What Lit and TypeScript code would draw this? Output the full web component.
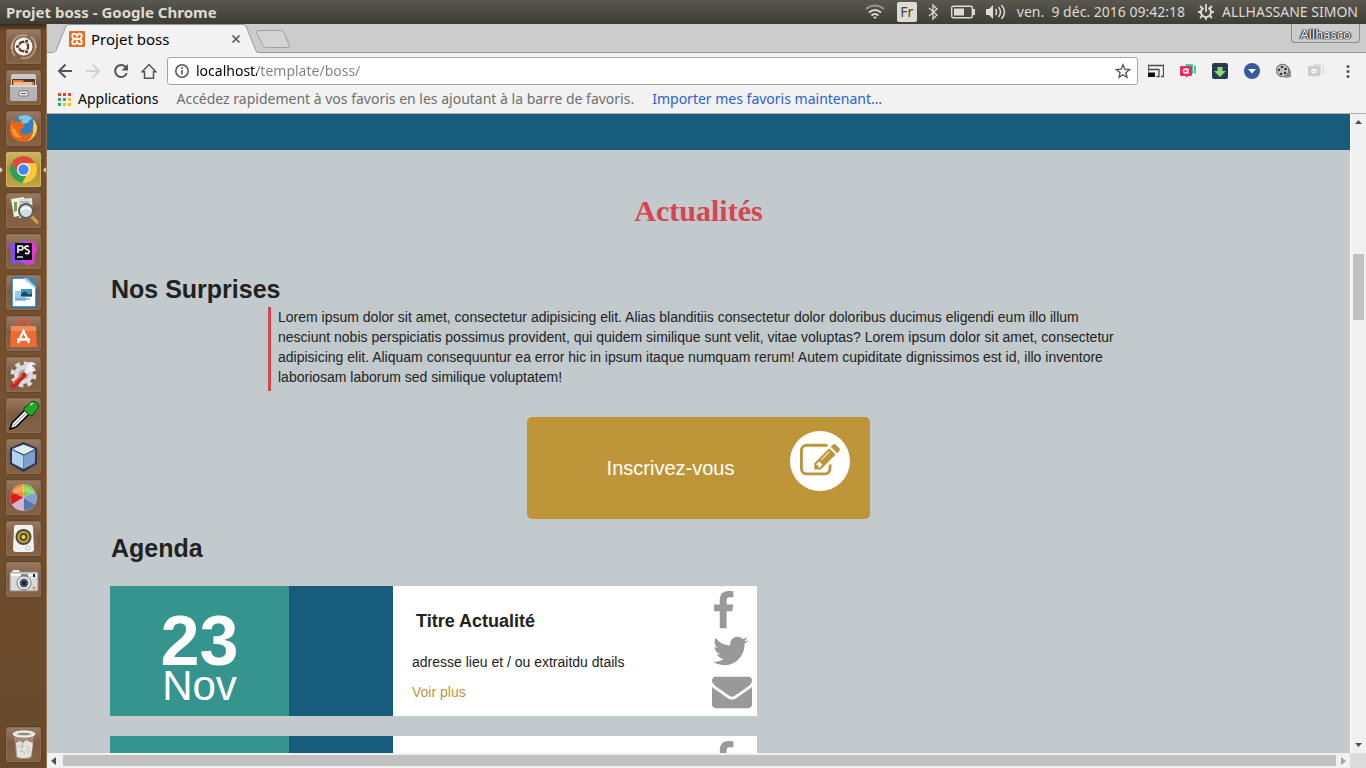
import { LitElement, html, css, svg } from "lit";
import { customElement } from "lit/decorators.js";

const PATHS = {
  facebook:
    "M1343 12v264h-157q-86 0-116 36t-30 108v189h293l-39 296h-254v759h-306v-759h-255v-296h255v-218q0-186 104-288.5t277-102.5q147 0 228 12z",
  twitter:
    "M1684 408q-67 98-162 167 1 14 1 42 0 130-38 259.5t-115.5 248.5-184.5 210.5-258 146-323 54.5q-271 0-496-145 35 4 78 4 225 0 401-138-105-2-188-64.5t-114-159.5q33 5 61 5 43 0 85-11-112-23-185.5-111.5t-73.5-205.5v-4q68 38 146 41-66-44-105-115t-39-154q0-88 44-163 121 149 294.5 238.5t371.5 99.5q-8-38-8-74 0-134 94.5-228.5t228.5-94.5q140 0 236 102 109-21 205-78-37 115-142 178 93-10 186-50z",
  envelope:
    "M1792 710v794q0 66-47 113t-113 47h-1472q-66 0-113-47t-47-113v-794q44 49 101 87 362 246 497 345 57 42 92.5 65.5t94.5 48 110 24.5h2q51 0 110-24.5t94.5-48 92.5-65.5q170-123 498-345 57-39 100-87zm0-294q0 79-49 151t-122 123q-376 261-468 325-10 7-42.5 31t-54 38-52 31.5-57.5 27-50 9h-2q-23 0-50-9t-57.5-27-52-31.5-54-38-42.5-31q-91-64-262-182.5t-205-142.5q-62-42-117-115.5t-55-136.5q0-78 41.5-130t118.5-52h1472q65 0 112.5 47t47.5 113z",
  edit:
    "M888 1184l116-116-152-152-116 116v56h96v96h56zm440-720q-16-16-33 1l-350 350q-17 17-1 33t33-1l350-350q17-17 1-33zm80 594v190q0 119-84.5 203.5t-203.5 84.5h-832q-119 0-203.5-84.5t-84.5-203.5v-832q0-119 84.5-203.5t203.5-84.5h832q63 0 117 25 15 7 18 23 3 17-9 29l-49 49q-14 14-32 8-23-6-45-6h-832q-66 0-113 47t-47 113v832q0 66 47 113t113 47h832q66 0 113-47t47-113v-126q0-13 9-22l64-64q15-15 35-7t20 29zm-96-738l288 288-672 672h-288v-288zm444 132l-92 92-288-288 92-92q28-28 68-28t68 28l152 152q28 28 28 68t-28 68z",
};

/* Launcher artwork, each on a 35 by 35 grid */
const LAUNCHER = [
  {
    label: "Rechercher",
    art: svg`<g fill="none" stroke="#d9c3b0" stroke-opacity=".55" stroke-width="2"><path d="M6 20C5 11 12 4 21 7"/><path d="M29 14c2 9-5 17-14 15"/><path d="M9 27C5 23 5 17 7 14" /><path d="M25 8c4 3 5 7 5 11"/></g>
      <circle cx="17.500" cy="17.500" r="9" fill="#fff"/><circle cx="17.500" cy="17.500" r="4.700" fill="none" stroke="#5c3b26" stroke-width="2.400"/>
      <g fill="#5c3b26" stroke="#fff" stroke-width="1"><circle cx="11.500" cy="17.500" r="2.100"/><circle cx="20.600" cy="12.200" r="2.100"/><circle cx="20.600" cy="22.800" r="2.100"/></g>`,
  },
  {
    label: "Fichiers",
    art: svg`<path d="M5 6q0-2 2-2h21q2 0 2 2v10H5z" fill="#c9c9c9"/><path d="M6 9h23v7H6z" fill="#4a3a30"/><path d="M7 10h10l1 2h10v4H7z" fill="#e9772f"/><path d="M8 12h18v4H8z" fill="#f7b98a"/>
      <path d="M4 15h27v14q0 2-2 2H6q-2 0-2-2z" fill="#b4b4b4"/><path d="M4 15h27v2H4z" fill="#d6d6d6"/><rect x="13" y="21" width="9" height="5" rx="1" fill="#eee" stroke="#777"/><path d="M15 23h5v1h-5z" fill="#555"/>`,
  },
  {
    label: "Firefox",
    art: svg`<circle cx="18" cy="17" r="13" fill="#2f7fc1"/><path d="M12 6q9-5 15 2-4 0-5 4l-6 1z" fill="#7cc6ec"/>
      <path d="M4 15q0-5 3-8 0 3 2 4 2-1 4 0 1-3 4-3-2 2-1 5 3 1 3 3l-4 2q-2 3 2 5 5 2 8-2 5-4 3-11 5 5 2 12-3 9-12 9T5 24q-2-4-1-9z" fill="#e8641b"/><path d="M27 8q6 6 3 14-3 6-8 8 6-6 5-12 1-5 0-10z" fill="#fbd04b"/><path d="M5 13q2 5 5 6 1 5 6 7-6 2-9-3-2-5-2-10z" fill="#f79a28"/>`,
  },
  {
    label: "Google Chrome",
    active: true,
    art: svg`<circle cx="17.500" cy="17.500" r="13.500" fill="#fcc934"/><path d="M5.800 10.700a13.500 13.500 0 0 0 10.200 20.200l5.800-10L11.500 20z" fill="#2aa058"/><path d="M17.500 11h11.700a13.500 13.500 0 0 0-23.400-.3l5.900 10z" fill="#de4b3c"/>
      <circle cx="17.500" cy="17.500" r="6.600" fill="#fff"/><circle cx="17.500" cy="17.500" r="5.200" fill="#4587f0"/>`,
  },
  {
    label: "Visionneur de documents",
    art: svg`<path d="M5 6l13-2 3 17-13 3z" fill="#f4f2e8"/><path d="M12 6l14-1 1 19-14 1z" fill="#e4e2d6"/><path d="M8 9l3 0v9l-3 1z" fill="#7a9e52"/><path d="M14 9h9M14 12h4" stroke="#888"/>
      <path d="M25 23l6 6" stroke="#d39a3a" stroke-width="3.500" stroke-linecap="round"/><circle cx="20" cy="18" r="7" fill="#cfdde4" stroke="#5c5f60" stroke-width="2"/><path d="M15 17q5-5 10 0" stroke="#fff" fill="none" stroke-width="2"/>`,
  },
  {
    label: "PhpStorm",
    art: svg`<path d="M4 9l9 2 5-5 11 2 2 9-3 5 1 7-8 2-6-3-9 2-1-8z" fill="#b24df0"/><path d="M4 9l9 2 4-4-2 20-9 3z" fill="#7d4df2"/><path d="M22 7l7 1 2 9-3 5 1 7-8 2z" fill="#e23ccf"/><rect x="9" y="9" width="17" height="17" fill="#0c0a10"/>
      <path d="M12 19v-7h3q2 0 2 2t-2 2h-3M23 12.500q-3-1-4 .5t2 2.500 2 3-4 .5" fill="none" stroke="#fff" stroke-width="1.600"/><path d="M11 23h6" stroke="#fff" stroke-width="1.300"/>`,
  },
  {
    label: "LibreOffice Impress",
    art: svg`<path d="M6 3h15l9 8v21H6z" fill="#fff" stroke="#2376ae" stroke-width="1.500"/><path d="M17 3h13v9z" fill="#3d87b5"/><path d="M17 3l4 0 9 9v2z" fill="#9cc9e3"/><path d="M9 16h11v10H9z" fill="#9ecbe8"/><path d="M15 14h11v8H15z" fill="#3c97c9"/><path d="M15 19q4-4 6-1t5 0v3H15z" fill="#26474d"/><path d="M9 24h15" stroke="#4b93c0"/>`,
  },
  {
    label: "Logithèque",
    art: svg`<path d="M12 11V7q0-3 3-3h5q3 0 3 3v4" fill="none" stroke="#d8583a" stroke-width="2.500"/><path d="M5 10h25l1 21H4z" fill="#ee6a35"/><path d="M5 10h25v5H5z" fill="#f58c57"/><path d="M12 27l5.500-12L23 27M11 23.500h13" fill="none" stroke="#fff" stroke-width="2.300"/>`,
  },
  {
    label: "Paramètres système",
    art: svg`<circle cx="17.500" cy="17.500" r="8.500" fill="#dcdcdc" stroke="#dcdcdc" stroke-width="2"/><circle cx="17.500" cy="17.500" r="11" fill="none" stroke="#dcdcdc" stroke-width="4" stroke-dasharray="4.600 4.040"/><circle cx="17.500" cy="17.500" r="5" fill="#aaa39e"/>
      <path d="M17 19l8-9" stroke="#f2f2f2" stroke-width="4"/><path d="M22 6q5-3 8 2l-4 0 0 4 4 1q-5 4-9-1z" fill="#f2f2f2"/><path d="M7 29L18 18" stroke="#cc1f1f" stroke-width="5" stroke-linecap="round"/><path d="M7 27l9-9" stroke="#f06a5c" stroke-width="1.200"/>`,
  },
  {
    label: "Pipette",
    art: svg`<path d="M4 31l2-6L20 11l4 4L10 29z" fill="#fff" stroke="#000" stroke-width="1.500"/><path d="M7 28L21 14" stroke="#aaa" stroke-width="1.500"/><path d="M18 10l3-2 4-4q3-2 6 1t1 6l-4 4-2 3-3-1-5-5z" fill="#27a327" stroke="#0a4a0a"/><path d="M24 7l3-2" stroke="#9be79b" stroke-width="2"/>`,
  },
  {
    label: "NetBeans",
    art: svg`<path d="M17.500 3L31 9v16l-13.500 8L4 25V9z" fill="#1d2d52" opacity=".85"/><path d="M17.500 5.500L29 10l-11 5.500L6 10z" fill="#dcedf0"/><path d="M6 11l11.500 5.500V30L6 24z" fill="#b4d1ef"/><path d="M29 11l-11 5.500V30l11-6z" fill="#7d9fcb"/>`,
  },
  {
    label: "Sélecteur de couleurs",
    art: svg`<g stroke="#fff" stroke-opacity=".5" stroke-width=".5"><path d="M17.500 17.500L6 11.500A13 13 0 0 1 17.500 4.500z" fill="#f98a2e"/><path d="M17.500 17.500v-13A13 13 0 0 1 29 11.500z" fill="#7bcf3c"/><path d="M17.500 17.500L29 11.500a13 13 0 0 1 0 13z" fill="#7fa1d0"/><path d="M17.500 17.500L29 24.500a13 13 0 0 1-11.500 6z" fill="#5477b4"/><path d="M17.500 17.500v13a13 13 0 0 1-11.500-6z" fill="#d5b3d2"/><path d="M17.500 17.500L6 24.500a13 13 0 0 1 0-13z" fill="#dc1c1c"/></g><path d="M6 15a12 12 0 0 1 23 0q-12-6-23 0z" fill="#fff" opacity=".25"/>`,
  },
  {
    label: "Rhythmbox",
    art: svg`<path d="M6 13q-3 4 0 10M29 13q3 4 0 10" fill="none" stroke="#7e756e"/><path d="M10 4h15q2 0 2 3l1 21q0 3-3 3H10q-3 0-3-3L8 7q0-3 2-3z" fill="#f1f1ef"/><circle cx="17.500" cy="16" r="8" fill="#4a4a42"/><circle cx="17.500" cy="16" r="6" fill="#c9a92b"/><circle cx="17.500" cy="16" r="4" fill="#57502f"/><circle cx="17.500" cy="16" r="2" fill="#e3cf6f"/><circle cx="22" cy="27" r="2" fill="#fff" stroke="#bbb"/>`,
  },
  {
    label: "Appareil photo",
    art: svg`<rect x="4" y="10" width="28" height="19" rx="1" fill="#d9d9d7" stroke="#8e8e8c"/><path d="M6 10l1-2h6l1 2z" fill="#eee"/><path d="M5 12h26v2H5z" fill="#f6f6f6"/><rect x="15" y="12" width="7" height="3" fill="#888"/><circle cx="18" cy="21" r="7" fill="#eee" stroke="#777"/><circle cx="18" cy="21" r="4.500" fill="#60646a"/><circle cx="18" cy="21" r="2.500" fill="#12243e"/><circle cx="28" cy="26" r="1.500" fill="#e8963c"/><path d="M28 12v3" stroke="#222" stroke-width="2"/>`,
  },
];

const TRASH = svg`<path d="M8 8h20l-2 22q-1 2-8 2t-8-2z" fill="#fff" opacity=".25"/><path d="M10 16l4-2 3 2 3-3 4 2 3 1-2 13q-1 2-7 2t-7-2z" fill="#e2e2de"/><path d="M12 18l3 3 3-2M21 19l3 3M14 25l2-2 3 4M22 26l1-2M17 15l-1 4M20 22l2 2" fill="none" stroke="#b4b4ae"/><ellipse cx="18" cy="7" rx="11" ry="3" fill="#dfe3e0" stroke="#fff"/><ellipse cx="18" cy="7" rx="7" ry="1.200" fill="#8f8a80"/>`;

const glyph = (width: number, height: number, box: string, body: unknown) =>
  html`<svg class="glyph" width=${width} height=${height} viewBox=${box} aria-hidden="true">${body}</svg>`;

@customElement("system-bar")
class SystemBar extends LitElement {
  static styles = css`
    :host { display: flex; align-items: center; height: 24px; padding: 0 8px 0 6px; color: #dfdbd2;
      background: linear-gradient(#59574e, #3d3c37); font: 14px/24px "Noto Sans", sans-serif; }
    .title { flex: 1; font-weight: 700; font-size: 15px; white-space: nowrap; }
    .tray { display: flex; align-items: center; white-space: nowrap; }
    .glyph { display: block; }
    .wifi { margin-right: 12px; }
    .lang { width: 20px; height: 20px; margin-right: 10px; border-radius: 2px; background: #dfdbd2; color: #45433e; text-align: center; line-height: 20px; }
    .blue { margin-right: 12px; }
    .bat { margin-right: 11px; }
    .vol { margin-right: 11px; }
    .clock { margin-right: 13px; }
    .gear { margin-right: 8px; }
  `;
  render() {
    return html`
      <span class="title">Projet boss - Google Chrome</span>
      <div class="tray">
        <span class="wifi">${glyph(20, 16, "0 0 20 16", svg`<g fill="none" stroke-width="2" stroke="#dfdbd2"><path d="M1 5q9-7 18 0" stroke-opacity=".5"/><path d="M4 8.500q6-5 12 0"/><path d="M6.500 11.500q3.500-3 7 0"/></g><path d="M8 13q2-1 4 0l-2 2z" fill="#dfdbd2"/>`)}</span>
        <span class="lang">Fr</span>
        <span class="blue">${glyph(12, 18, "0 0 12 18", svg`<path d="M2 5l8 7-4 4V2l4 4-8 7" fill="none" stroke="#dfdbd2" stroke-width="1.300"/>`)}</span>
        <span class="bat">${glyph(24, 14, "0 0 24 14", svg`<rect x=".7" y="1.200" width="20.600" height="11.600" rx="1.500" fill="none" stroke="#dfdbd2" stroke-width="1.400"/><path d="M3 3.500h10v7H3zM22 4h2v6h-2z" fill="#dfdbd2"/>`)}</span>
        <span class="vol">${glyph(20, 16, "0 0 20 16", svg`<path d="M0 5h3l4-4v14l-4-4H0z" fill="#dfdbd2"/><path d="M9.500 5q2 3 0 6M12.500 3q4 5 0 10M15.500 1q6 7 0 14" fill="none" stroke="#dfdbd2" stroke-width="1.500"/>`)}</span>
        <span class="clock">ven.&nbsp; 9 déc. 2016 09:42:18</span>
        <span class="gear">${glyph(16, 16, "0 0 16 16", svg`<path d="M5.500 3.800a5 5 0 1 0 5 0" fill="none" stroke="#dfdbd2" stroke-width="2"/><path d="M8 0v8M0 8h3M13 8h3M8 13v3M2 2l2.500 2.500M14 2l-2.500 2.500M2 14l2.500-2.500M14 14l-2.500-2.500" stroke="#dfdbd2" stroke-width="1.800"/>`)}</span>
        <span>ALLHASSANE SIMON</span>
      </div>`;
  }
}

@customElement("app-launcher")
class AppLauncher extends LitElement {
  static styles = css`
    :host { display: flex; flex-direction: column; justify-content: space-between; box-sizing: border-box; width: 47px; padding: 5px 0 6px; overflow: hidden;
      background: linear-gradient(#3d2716, #6f4a2c 7px, #74502f 45%, #67492b); border-right: 1px solid #98714f; }
    .apps { display: flex; flex-direction: column; gap: 6px; }
    .slot { display: flex; align-items: center; justify-content: space-between; }
    .slot::before, .slot::after { content: ""; width: 3px; border: solid transparent; border-width: 3px 0; box-sizing: border-box; }
    .active::before { border-left: 3px solid #d8cfc4; }
    .active::after { border-right: 3px solid #d8cfc4; }
    .tile { width: 35px; height: 35px; padding: 0; border: 0; border-radius: 3px; background: linear-gradient(#9a7d65, #7d5b40 45%, #846347);
      box-shadow: inset 0 0 0 1px #8c6d53, 0 0 2px #4b3018; }
    .active .tile { background: linear-gradient(#cdb96a, #ad9333 50%, #c0a644); box-shadow: inset 0 0 0 1px #cbb75e; }
    .glyph { display: block; }
  `;
  tile(label: string, art: unknown, active = false) {
    return html`<div class="slot ${active ? "active" : ""}"><button class="tile" aria-label=${label}>${glyph(35, 35, "0 0 35 35", art)}</button></div>`;
  }
  render() {
    return html`<div class="apps">${LAUNCHER.map((a) => this.tile(a.label, a.art, a.active))}</div>${this.tile("Corbeille", TRASH)}`;
  }
}

@customElement("browser-chrome")
class BrowserChrome extends LitElement {
  static styles = css`
    :host { display: block; background: #f2f2f2; border-bottom: 1px solid #b0b0b0; font: 14px/20px "Noto Sans", sans-serif; color: #000; }
    .glyph { display: block; }
    button { padding: 0; border: 0; background: none; }
    .strip { display: flex; align-items: flex-start; height: 29px; box-sizing: border-box; padding: 0 6px 0 5px;
      background: linear-gradient(#999, #999) bottom / 100% 1px no-repeat #ccc; }
    .tab { display: grid; width: 207px; height: 29px; }
    .tab > * { grid-area: 1 / 1; }
    .label { display: flex; align-items: center; padding: 1px 18px 0 17px; }
    .label .name { flex: 1; margin-left: 6px; font-size: 15px; }
    .new { margin: 6px 0 0 -4px; }
    .profile { margin-left: auto; height: 19px; width: 69px; border: 1px solid #8c8c8c; border-top: 0; border-radius: 0 0 4px 4px; color: #fff;
      font: 13px/20px "Noto Sans", sans-serif; text-shadow: 0 0 1px #000, 0 0 1px #000, 1px 0 1px #333, -1px 0 1px #333; }
    .toolbar { display: flex; align-items: center; padding: 4px 10px 3px; }
    .nav { display: flex; gap: 12px; margin-right: 10px; }
    .omni { flex: 1; display: flex; align-items: center; height: 28px; box-sizing: border-box; padding: 0 6px; border: 1px solid #a6a6a6; border-radius: 3px; background: #fff; }
    .address { flex: 1; min-width: 0; height: 24px; margin-left: 6px; padding: 0; border: 0; outline: 0; font: 14px/24px "Noto Sans", sans-serif;
      color: transparent; background: linear-gradient(90deg, #000 61px, #808080 61px); -webkit-background-clip: text; background-clip: text; }
    .ext { display: flex; gap: 16px; margin-left: 10px; }
    .marks { display: flex; align-items: center; gap: 18px; padding: 1px 11px 4px; white-space: nowrap; }
    .apps { display: flex; align-items: center; gap: 7px; color: #000; text-decoration: none; }
    .hint { color: #6e6e6e; }
    .import { color: #2a61d6; text-decoration: none; }
  `;
  render() {
    const dot = (x: number, y: number, c: string) => svg`<rect x=${x} y=${y} width="3" height="3" fill=${c}/>`;
    return html`
      <div class="strip">
        <div class="tab">
          ${glyph(207, 29, "0 0 207 29", svg`<path d="M0 28.500q3 0 4-2L14 2q1-1.500 3-1.500h174q2 0 3 1.500l10 25q1 1.500 3 1.500V29H0z" fill="#f2f2f2"/><path d="M0 28.500q3 0 4-2L14 2q1-1.500 3-1.500h174q2 0 3 1.500l10 25q1 1.500 3 1.500" fill="none" stroke="#999"/>`)}
          <div class="label">
            ${glyph(16, 16, "0 0 16 16", svg`<rect width="16" height="16" rx="1" fill="#e56f24"/><path d="M4 3q3-1 4 2 1-3 4-2 2 2-1 5 3 3 1 5-3 1-4-2-1 3-4 2-2-2 1-5-3-3-1-5z" fill="none" stroke="#fff" stroke-width="1.800"/><path d="M5.500 8h5" stroke="#fff" stroke-width="2"/>`)}
            <span class="name">Projet boss</span>
            <button aria-label="Fermer l'onglet">${glyph(10, 10, "0 0 10 10", svg`<path d="M1.500 1.500l7 7M8.500 1.500l-7 7" stroke="#5a5a5a" stroke-width="1.700"/>`)}</button>
          </div>
        </div>
        <button class="new" aria-label="Nouvel onglet">${glyph(36, 18, "0 0 36 18", svg`<path d="M3 .5h23q2 0 3 2l5.500 13q.5 2-1.500 2H11q-2 0-3-2L1.500 2.500Q1 .5 3 .5z" fill="#d4d4d4" stroke="#a0a0a0"/>`)}</button>
        <button class="profile">Allhasco</button>
      </div>
      <div class="toolbar">
        <div class="nav">
          <button aria-label="Précédent">${glyph(16, 16, "0 0 16 16", svg`<path d="M15 8H2M8.500 1.500L2 8l6.500 6.500" fill="none" stroke="#545454" stroke-width="2"/>`)}</button>
          <button aria-label="Suivant">${glyph(16, 16, "0 0 16 16", svg`<path d="M1 8h13M7.500 1.500L14 8l-6.500 6.500" fill="none" stroke="#d2d2d2" stroke-width="2"/>`)}</button>
          <button aria-label="Actualiser">${glyph(16, 16, "0 0 16 16", svg`<path d="M13 4.500A6 6 0 1 0 13.800 10" fill="none" stroke="#545454" stroke-width="2"/><path d="M15 1v6.500H8.500z" fill="#545454"/>`)}</button>
          <button aria-label="Accueil">${glyph(16, 16, "0 0 16 16", svg`<path d="M1.200 8.700L8 1.500l6.800 7.200h-2.300v6.500h-9V8.700z" fill="none" stroke="#545454" stroke-width="1.500"/>`)}</button>
        </div>
        <div class="omni">
          ${glyph(16, 16, "0 0 16 16", svg`<circle cx="8" cy="8" r="6.200" fill="none" stroke="#545454" stroke-width="1.500"/><path d="M7.200 7h1.600v4.500H7.200zM7.200 4.300h1.600v1.600H7.200z" fill="#545454"/>`)}
          <input class="address" type="text" aria-label="Adresse" value="localhost/template/boss/" />
          <button aria-label="Ajouter aux favoris">${glyph(16, 16, "0 0 16 16", svg`<path d="M8 1.800l1.800 4.400 4.700.4-3.600 3.100 1.100 4.600L8 11.800l-4 2.500 1.100-4.600L1.500 6.600l4.700-.4z" fill="none" stroke="#545454" stroke-width="1.300"/>`)}</button>
        </div>
        <div class="ext">
          <button aria-label="Caster">${glyph(16, 16, "0 0 16 16", svg`<path d="M.5 5.500v-3h15v11H13M.5 8.500v-2h10.500v7H8.500" fill="none" stroke="#4a4a4a" stroke-width="1.300"/><path d="M0 9.500h7V14H0z" fill="#111"/>`)}</button>
          <button aria-label="Appear">${glyph(16, 16, "0 0 16 16", svg`<path d="M5 1h7q1 0 1 1v9h-2z" fill="#3ecf9b"/><path d="M14 3l2-1v9l-2-1z" fill="#3ecf9b"/><path d="M1 3h10q1 0 1 1v8q0 1-1 1H8l-2 2v-2H1q-1 0-1-1V4q0-1 1-1z" fill="#f5265f"/><circle cx="5.500" cy="8" r="2" fill="none" stroke="#fff" stroke-width="1.400"/><path d="M8 5.500v5" stroke="#fff" stroke-width="1.300"/>`)}</button>
          <button aria-label="Télécharger">${glyph(16, 16, "0 0 16 16", svg`<rect width="16" height="16" rx="2" fill="#2b3a4e"/><path d="M5.500 4h5v4H14l-6 6-6-6h3.500z" fill="#86d978"/>`)}</button>
          <button aria-label="Options">${glyph(16, 16, "0 0 16 16", svg`<circle cx="8" cy="8" r="8" fill="#3b5a9d"/><path d="M4 6h8l-4 4.500z" fill="#fff"/>`)}</button>
          <button aria-label="Vidéo">${glyph(16, 16, "0 0 16 16", svg`<path d="M7 1q6 1 8 8v5l-6 1z" fill="#8d8d8d"/><circle cx="6.500" cy="7.500" r="6.300" fill="#c4c4c4" stroke="#666"/><g fill="#3a3a3a"><circle cx="6" cy="4" r="1.300"/><circle cx="3" cy="7" r="1.300"/><circle cx="9.500" cy="6" r="1.300"/><circle cx="5" cy="11" r="1.300"/><circle cx="9" cy="10" r="1.300"/></g>`)}</button>
          <button aria-label="Appel">${glyph(16, 16, "0 0 16 16", svg`<path d="M5 1h7q1 0 1 1v9h-2z" fill="#dedede"/><path d="M14 3l2-1v9l-2-1z" fill="#dedede"/><path d="M1 3h10q1 0 1 1v8q0 1-1 1H8l-2 2v-2H1q-1 0-1-1V4q0-1 1-1z" fill="#cdcdcd"/><circle cx="5.500" cy="8" r="1.600" fill="none" stroke="#fff" stroke-width="1.200"/><path d="M7.700 6v4" stroke="#fff" stroke-width="1.200"/>`)}</button>
          <button aria-label="Menu">${glyph(16, 16, "0 0 16 16", svg`<g fill="#545454"><circle cx="8" cy="3.500" r="1.500"/><circle cx="8" cy="8.500" r="1.500"/><circle cx="8" cy="13.500" r="1.500"/></g>`)}</button>
        </div>
      </div>
      <div class="marks">
        <a class="apps" href="#">${glyph(13, 13, "0 0 13 13", [
          dot(0, 0, "#ea4335"), dot(5, 0, "#ea4335"), dot(10, 0, "#ea4335"),
          dot(0, 5, "#34a853"), dot(5, 5, "#4285f4"), dot(10, 5, "#fbbc05"),
          dot(0, 10, "#34a853"), dot(5, 10, "#fbbc05"), dot(10, 10, "#fbbc05"),
        ])}<span>Applications</span></a>
        <span class="hint">Accédez rapidement à vos favoris en les ajoutant à la barre de favoris.</span>
        <a class="import" href="#">Importer mes favoris maintenant…</a>
      </div>`;
  }
}

@customElement("agenda-card")
class AgendaCard extends LitElement {
  static styles = css`
    :host { display: grid; grid-template-columns: 179px 104px 1fr auto; height: 130px; background: #fff; color: #222; }
    .date { padding-top: 27px; background: #36948f; color: #fff; text-align: center; }
    .day { font-size: 70px; line-height: 56px; font-weight: 700; }
    .month { font-size: 42px; line-height: 34px; }
    .image { background: #185c7d; }
    .body { padding: 25px 19px 0; font-size: 14px; line-height: 20px; }
    .title { margin: 0 0 21px 4px; font-size: 18px; line-height: 20px; }
    .place { margin: 0 0 10px; }
    .more { color: #bf9539; text-decoration: none; }
    .social { display: flex; flex-direction: column; padding: 5px 5px 0 0; }
    .glyph { display: block; fill: #999; }
  `;
  render() {
    return html`
      <div class="date"><div class="day">23</div><div class="month">Nov</div></div>
      <div class="image"></div>
      <div class="body">
        <h3 class="title">Titre Actualité</h3>
        <p class="place">adresse lieu et / ou extraitdu dtails</p>
        <a class="more" href="#">Voir plus</a>
      </div>
      <div class="social">
        <a href="#" aria-label="Facebook">${glyph(23, 40, "389 0 1024 1792", svg`<path d=${PATHS.facebook} />`)}</a>
        <a href="#" aria-label="Twitter">${glyph(37, 40, "60 0 1664 1792", svg`<path d=${PATHS.twitter} />`)}</a>
        <a href="#" aria-label="E-mail">${glyph(40, 40, "0 0 1792 1792", svg`<path d=${PATHS.envelope} />`)}</a>
      </div>`;
  }
}

@customElement("news-page")
class NewsPage extends LitElement {
  static styles = css`
    :host { display: block; overflow: hidden; background: #c2cacd; color: #222; font: 14px/20px "Liberation Sans", Arial, sans-serif; }
    .band { height: 36px; background: #185c7d; }
    .wrap { max-width: 1177px; margin: 0 auto; }
    .heading { margin: 41px 0 43px; text-align: center; color: #d64550; font: 700 30px/40px "Liberation Serif", serif; }
    .section { margin: 0 1px; font-size: 25px; line-height: 30px; }
    .quote { margin: 3px 158px 26px; padding: 0 0 4px 7px; border-left: 3px solid #d64550; }
    .signup { display: flex; align-items: center; margin: 0 auto 14px; height: 102px; padding: 0 20px 0 80px; gap: 56px; border: 0; border-radius: 5px;
      background: #bf9539; color: #fff; font: 20px/24px "Liberation Sans", Arial, sans-serif; }
    .badge { display: grid; place-items: center; align-self: flex-start; width: 60px; height: 60px; margin-top: 14px; border-radius: 50%; background: #fff; }
    .glyph { display: block; fill: #bf9539; }
    .cards { display: grid; gap: 20px; width: 55%; margin-top: 23px; }
  `;
  render() {
    return html`
      <div class="band"></div>
      <div class="wrap">
        <h1 class="heading">Actualités</h1>
        <h2 class="section">Nos Surprises</h2>
        <p class="quote">Lorem ipsum dolor sit amet, consectetur adipisicing elit. Alias blanditiis consectetur dolor doloribus ducimus eligendi eum illo illum nesciunt nobis perspiciatis possimus provident, qui quidem similique sunt velit, vitae voluptas? Lorem ipsum dolor sit amet, consectetur adipisicing elit. Aliquam consequuntur ea error hic in ipsum itaque numquam rerum! Autem cupiditate dignissimos est id, illo inventore laboriosam laborum sed similique voluptatem!</p>
        <button class="signup">Inscrivez-vous<span class="badge">${glyph(40, 40, "0 0 1792 1792", svg`<path d=${PATHS.edit} />`)}</span></button>
        <h2 class="section">Agenda</h2>
        <div class="cards"><agenda-card></agenda-card><agenda-card></agenda-card></div>
      </div>`;
  }
}

@customElement("app-root")
class AppRoot extends LitElement {
  static styles = css`
    :host { display: grid; grid-template: auto minmax(0, 1fr) / auto minmax(0, 1fr); height: 100vh; overflow: hidden; }
    .top { grid-column: 1 / -1; }
    .window { display: grid; grid-template-rows: auto minmax(0, 1fr); }
    .view { display: grid; grid-template: minmax(0, 1fr) 15px / minmax(0, 1fr) 16px; min-height: 0; background: #f1f1f1; }
    .bar { display: flex; align-items: center; }
    .vertical { flex-direction: column; border-left: 1px solid #fff; padding: 6px 0; }
    .horizontal { padding: 0 4px; }
    .before { flex: 130; }
    .thumb { flex: 66; background: #c1c1c1; }
    .after { flex: 423; }
    .vertical .thumb { width: 11px; }
    .horizontal .thumb { flex: 1; height: 11px; margin: 0 5px 0 7px; }
    .corner { background: #dcdcdc; }
    .glyph { display: block; }
  `;
  render() {
    return html`
      <system-bar class="top"></system-bar>
      <app-launcher></app-launcher>
      <div class="window">
        <browser-chrome></browser-chrome>
        <div class="view">
          <news-page></news-page>
          <div class="bar vertical">
            ${glyph(7, 4, "0 0 7 4", svg`<path d="M0 4l3.500-4L7 4z" fill="#505050"/>`)}
            <div class="before"></div><div class="thumb"></div><div class="after"></div>
            ${glyph(7, 4, "0 0 7 4", svg`<path d="M0 0l3.500 4L7 0z" fill="#505050"/>`)}
          </div>
          <div class="bar horizontal">
            ${glyph(5, 8, "0 0 5 8", svg`<path d="M5 0L0 4l5 4z" fill="#505050"/>`)}
            <div class="thumb"></div>
            ${glyph(5, 8, "0 0 5 8", svg`<path d="M0 0l5 4-5 4z" fill="#a3a3a3"/>`)}
          </div>
          <div class="corner"></div>
        </div>
      </div>`;
  }
}
